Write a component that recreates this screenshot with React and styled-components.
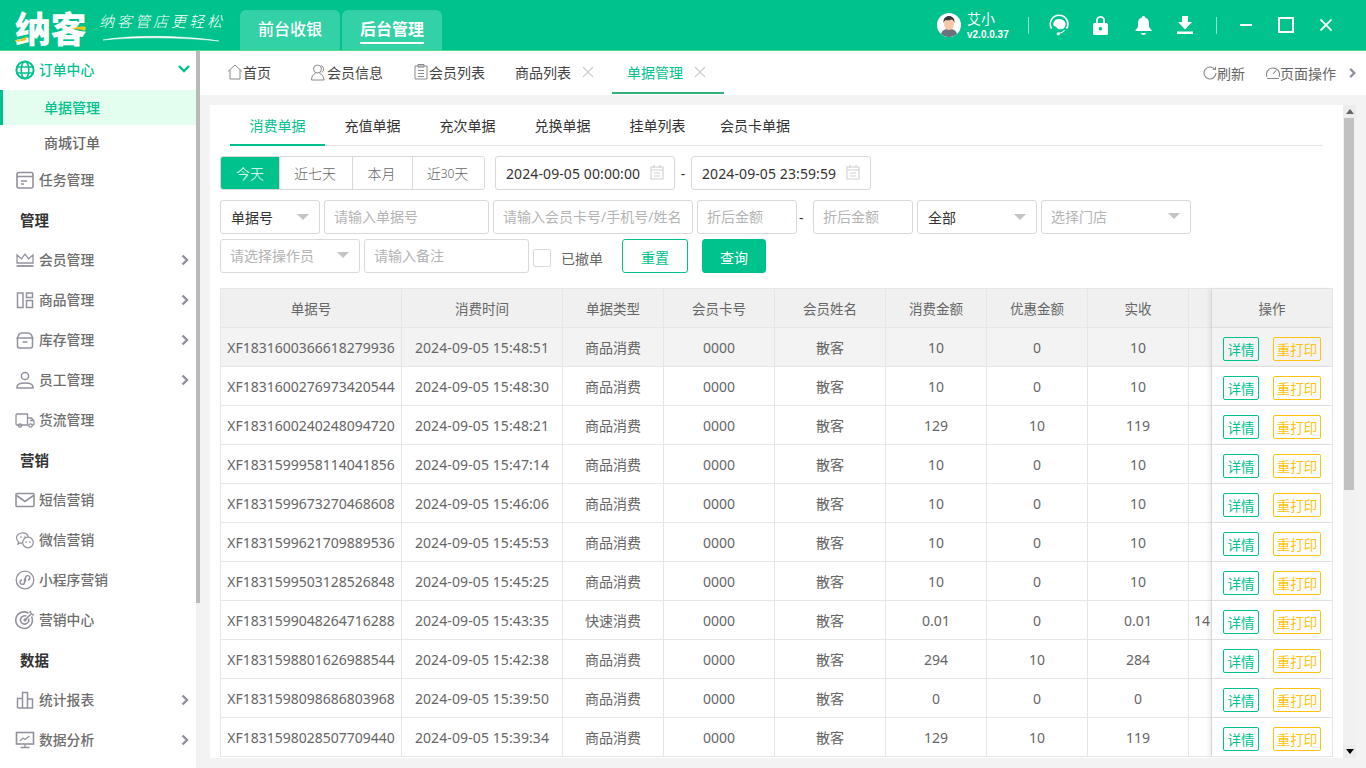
import React from 'react';
import styled, { createGlobalStyle } from 'styled-components';

const GREEN = '#00c28c';
const FONT = '"Noto Sans", "Noto Sans CJK SC", sans-serif';

const Global = createGlobalStyle`
  html, body { margin: 0; padding: 0; height: 100%; overflow: hidden; background: #f3f3f3; }
  body { font-family: ${FONT}; font-size: 14px; color: #666; }
  * { box-sizing: border-box; }
  input { font-family: inherit; }
`;

const Shell = styled.div`display: flex; flex-direction: column; width: 1366px; height: 768px; overflow: hidden;`;

/* ---------- header ---------- */
const Header = styled.header`
  flex: 0 0 51px; display: flex; align-items: stretch; background: ${GREEN};
  border-bottom: 1px solid #4fdc8e; color: #fff;
`;
const Brand = styled.div`position: relative; flex: 0 0 240px; display: flex; align-items: flex-start; padding: 5px 0 0 15px;`;
const BrandName = styled.span`font-size: 36px; line-height: 44px; font-weight: 900; letter-spacing: -0.5px; font-family: "Noto Sans CJK SC", sans-serif;`;
const Slogan = styled.span`
  margin: 6px 0 0 13px; font-size: 15px; line-height: 20px; letter-spacing: 3px; font-style: italic; font-weight: 300;
  font-family: "Noto Sans CJK SC", sans-serif; white-space: nowrap;
`;
const BrandArt = styled.svg`position: absolute; left: 0; top: 0; pointer-events: none;`;
const Modes = styled.nav`display: flex; gap: 2px; align-items: flex-end;`;
const Mode = styled.div`
  width: 100px; height: 40px; background: #33d1a6; border-radius: 6px 6px 0 0; display: flex; align-items: center; justify-content: center; padding-top: 1px;
`;
const ModeLabel = styled.span`
  font-size: 16px; line-height: 24px; font-weight: ${p => (p.$on ? 700 : 500)}; padding-bottom: 1px;
  border-bottom: 2px solid ${p => (p.$on ? '#fff' : 'transparent')};
`;
const HeaderRight = styled.div`margin-left: auto; display: flex; align-items: center; padding-right: 34px;`;
const Avatar = styled.svg`width: 24px; height: 24px; margin-right: 6px;`;
const UserBox = styled.div`display: flex; flex-direction: column; width: 61px; margin-top: 1px;`;
const UserName = styled.span`font-size: 14px; line-height: 18px;`;
const Version = styled.span`font-family: "Liberation Sans", sans-serif; font-size: 10px; line-height: 14px; font-weight: 700; white-space: nowrap;`;
const VLine = styled.i`display: block; width: 1px; height: 17px; background: rgba(255,255,255,.55); margin-left: ${p => p.$ml || 0}px;`;
const HIcon = styled.svg`display: block; margin-left: ${p => p.$ml}px; fill: #fff;`;

/* ---------- body ---------- */
const Body = styled.div`flex: 1; display: flex; min-height: 0;`;
const Side = styled.aside`flex: 0 0 200px; background: #fff; display: flex; min-height: 0;`;
const SideList = styled.div`flex: 1; min-width: 0; overflow: hidden;`;
const SideTrack = styled.div`flex: 0 0 4px; background: #f1f1f1;`;
const SideThumb = styled.div`height: 552px; background: #b9b9b9;`;
const NavRow = styled.div`
  height: ${p => p.$h || 40}px; display: flex; align-items: center; padding: ${p => (p.$h ? '0 5px 2px 15px' : '0 5px 0 15px')}; gap: 4px;
  font-weight: 500; color: ${p => (p.$green ? GREEN : '#6e6e6e')}; font-size: 13.8px;
`;
const NavIcon = styled.svg`width: 20px; height: 20px; flex: none; fill: none; stroke: currentColor; stroke-width: 1.4; color: ${p => (p.$green ? GREEN : '#92929f')};`;
const NavText = styled.span`flex: 1; line-height: 20px; white-space: nowrap;`;
const Chevron = styled.svg`width: 12px; height: 12px; flex: none; fill: none; stroke: ${p => p.$c || '#8f8f9d'}; stroke-width: 2.4;`;
const DownChevron = styled(Chevron)`margin: -2px 1px 0 0;`;
const SubRow = styled.div`
  height: 35px; display: flex; align-items: center; padding: 0 0 2px ${p => (p.$on ? 41 : 44)}px; font-weight: 500;
  color: ${p => (p.$on ? GREEN : '#666')}; background: ${p => (p.$on ? '#e3fdee' : 'transparent')};
  border-left: ${p => (p.$on ? `3px solid ${GREEN}` : '0')};
`;
const Section = styled.div`height: 40px; display: flex; align-items: center; padding: 0 0 2px 20px; font-size: 14.5px; font-weight: 700; color: #333;`;

const Main = styled.main`flex: 1; min-width: 0; display: flex; flex-direction: column;`;
const TabBar = styled.div`flex: 0 0 44px; background: #fff; display: flex; align-items: stretch; padding: 0 8px 1px 12px;`;
const Tab = styled.div`
  display: flex; align-items: center; padding: 0 ${p => (p.$on ? 18 : 15)}px 0 15px; margin-right: ${p => p.$after || 0}px; color: ${p => (p.$on ? GREEN : '#444')};
  border-bottom: 2px solid ${p => (p.$on ? '#2fb37a' : 'transparent')}; white-space: nowrap;
`;
const TabIcon = styled.svg`width: ${p => p.$w || 16}px; height: 18px; fill: none; stroke: #8a8a8a; stroke-width: 1;`;
const TabClose = styled.svg`width: 12px; height: 12px; margin-left: 11px; stroke: #cfcfcf; stroke-width: 1.3;`;
const TabTools = styled.div`margin-left: auto; display: flex; align-items: center; color: #666;`;
const Tool = styled.div`display: flex; align-items: center; margin-right: ${p => p.$mr}px;`;
const ToolIcon = styled.svg`width: 14px; height: 14px; fill: none; stroke: #888; stroke-width: 1.1;`;
const ToolChevron = styled(Chevron)`width: 11px;`;

const Content = styled.div`flex: 1; min-height: 0; padding: 10px; display: flex;`;
const Card = styled.section`flex: 1; min-width: 0; display: flex; background: #fff;`;
const CardBody = styled.div`flex: 1; min-width: 0; overflow: hidden; padding: 0 10px;`;
const Track = styled.div`flex: 0 0 13px; background: #f1f1f1; display: flex; flex-direction: column; align-items: center;`;
const TrackBtn = styled.div`flex: 0 0 13px; align-self: stretch; background: #ececec; display: flex; align-items: center; justify-content: center;`;
const Arrow = styled.i`
  width: 0; height: 0; border-left: 4px solid transparent; border-right: 4px solid transparent;
  ${p => (p.$up ? 'border-bottom: 5px solid #666;' : 'border-top: 5px solid #000;')}
`;
const Thumb = styled.div`flex: 0 0 372px; width: 10px; margin-right: 1px; background: #c1c1c1;`;
const TrackRest = styled.div`flex: 1;`;

const SubTabs = styled.div`display: flex; height: 41px; margin: 0 10px; border-bottom: 1px solid #e6e6e6;`;
const SubTab = styled.div`
  width: ${p => p.$w || 95}px; height: 41px; display: flex; align-items: center; justify-content: center;
  white-space: nowrap; color: ${p => (p.$on ? GREEN : '#333')}; border-bottom: 2px solid ${p => (p.$on ? GREEN : 'transparent')};
`;

const Row = styled.div`display: flex; align-items: center; gap: 4px; height: 34px; margin-top: ${p => p.$mt}px;`;
const Range = styled.div`display: flex; width: 265px; height: 34px; border: 1px solid #d9d9d9; border-radius: 3px; overflow: hidden; margin-right: 6px;`;
const RangeItem = styled.div`
  flex: 0 0 ${p => p.$w}px; display: flex; align-items: center; justify-content: center; white-space: nowrap; font-weight: 300;
  background: ${p => (p.$on ? GREEN : '#fff')}; color: ${p => (p.$on ? '#fff' : '#666')};
  & + & { border-left: 1px solid #d9d9d9; padding-right: 2px; }
`;
const SmallDigits = styled.span`font-size: 12px;`;
const DateBox = styled.div`
  width: 180px; height: 34px; border: 1px solid #d9d9d9; border-radius: 3px; display: flex; align-items: center; justify-content: space-between;
  padding: 0 10px; color: #333; white-space: nowrap; letter-spacing: .1px;
`;
const CalIcon = styled.svg`width: 14px; height: 16px; fill: none; stroke: #d0d0d0; stroke-width: 1.1; margin-top: -3px;`;
const Dash = styled.span`width: 8px; color: #333; margin: 0 2px 0 -2px;`;
const DateDash = styled.span`width: 8px; color: #333; text-align: center;`;
const Input = styled.input`
  width: ${p => p.$w}px; height: 34px; border: 1px solid #d9d9d9; border-radius: 3px; padding: 0 9px 2px; font-size: 14px; outline: none; color: #333;
  &::placeholder { color: #b4b4b4; opacity: 1; }
`;
const Select = styled.div`
  width: ${p => p.$w}px; height: 34px; border: 1px solid #d9d9d9; border-radius: 3px; padding: 0 10px ${p => (p.$ph ? 2 : 0)}px ${p => (p.$ph ? 9 : 10)}px; display: flex; align-items: center; justify-content: space-between;
  color: ${p => (p.$ph ? '#b4b4b4' : '#333')}; white-space: nowrap;
`;
const Caret = styled.i`width: 0; height: 0; border-left: 6px solid transparent; border-right: 6px solid transparent; border-top: 6px solid #c4c4c4;`;
const Check = styled.i`display: block; width: 18px; height: 18px; border: 1px solid #d9d9d9; border-radius: 2px; margin: 4px 6px 0 0;`;
const CheckLabel = styled.span`color: #666; margin-top: 4px;`;
const Btn = styled.button`
  width: ${p => p.$w}px; height: 34px; border-radius: 3px; border: 1px solid ${GREEN}; font-family: inherit; font-size: 14px; margin-left: ${p => p.$ml}px; padding: 2px 0 0;
  background: ${p => (p.$fill ? GREEN : '#fff')}; color: ${p => (p.$fill ? '#fff' : GREEN)};
`;

const Table = styled.div`margin-top: 15px; width: 1113px; border-top: 1px solid #e6e6e6; border-left: 1px solid #e6e6e6;`;
const TR = styled.div`
  display: grid; grid-template-columns: 181px 161px 101px 111px 111px 101px 101px 101px 23px 121px; height: 39px;
  background: ${p => (p.$head ? '#f0f0f0' : p.$hover ? '#f3f3f3' : '#fff')};
`;
const TD = styled.div`
  display: flex; align-items: center; justify-content: ${p => (p.$left ? 'flex-start' : 'center')}; padding-left: ${p => (p.$left ? 5 : 0)}px;
  white-space: nowrap; overflow: hidden; color: #666; border-right: 1px solid #e6e6e6; border-bottom: 1px solid #e6e6e6;
  font-size: ${p => (p.$head ? 13.5 : 14)}px; letter-spacing: ${p => (p.$wide ? '.1px' : '0')};
`;
const FixedTD = styled(TD)`
  position: relative; gap: 14px; background: ${p => (p.$head ? '#f0f0f0' : p.$hover ? '#f3f3f3' : '#fff')}; box-shadow: -3px 0 4px rgba(0,0,0,.07);
`;
const MiniBtn = styled.span`
  width: ${p => p.$w}px; height: 24px; border: 1px solid ${p => p.$c}; border-radius: 2px; color: ${p => p.$c}; display: flex; align-items: center; justify-content: center; margin-top: 4px; font-size: 13.5px;
`;

/* ---------- icons ---------- */
const paths = {
  globe: <><circle cx="10" cy="10" r="8.6" strokeWidth="2"/><ellipse cx="10" cy="10" rx="3.8" ry="8.6" strokeWidth="1.6"/><path d="M1.6 7h16.8M1.6 13h16.8" strokeWidth="1.6"/></>,
  task: <><rect x="2" y="2.5" width="16" height="15.5" rx="2" strokeWidth="1.6"/><path d="M2 6.5h16M6 11h6M6 14h3" strokeWidth="1.6"/></>,
  crown: <><path d="M2 13V5l4.5 3.8L10 4l3.5 4.8L18 5v8z" strokeWidth="1.3"/><path d="M1.5 16h17" strokeWidth="1.8"/></>,
  goods: <><rect x="2.5" y="3" width="5.5" height="14.5" strokeWidth="1.5"/><rect x="11.5" y="3" width="6" height="4.5" strokeWidth="1.5"/><rect x="11.5" y="10.5" width="6" height="7" strokeWidth="1.5"/></>,
  store: <><path d="M2.5 8.5C3 5 4.5 3 7 3h6c2.5 0 4 2 4.5 5.5" strokeWidth="1.5"/><path d="M1.5 8h17" strokeWidth="1.5"/><path d="M2.5 8v8a2 2 0 0 0 2 2h11a2 2 0 0 0 2-2V8M7.5 12h5" strokeWidth="1.5"/></>,
  user: <><circle cx="10" cy="6" r="3.6" strokeWidth="1.5"/><path d="M2 18v-.8c0-2.4 3-4.2 8-4.2s8 1.8 8 4.2v.8z" strokeWidth="1.5"/></>,
  truck: <><path d="M12.5 15H7M3 15H2a1 1 0 0 1-1-1V5a1 1 0 0 1 1-1h10.5v11zM12.5 8h4l2.500 3v3a1 1 0 0 1-1 1h-1M12.5 15h1M15 10.500h4" strokeWidth="1.3"/><circle cx="5" cy="15.500" r="1.700" strokeWidth="1.3"/><circle cx="15.500" cy="15.500" r="1.700" strokeWidth="1.300"/></>,
  mail: <><rect x="1" y="3.500" width="18" height="13" rx="1" strokeWidth="1.600"/><path d="M1.500 5.500L10 11.500l8.500-6" strokeWidth="1.600"/></>,
  wechat: <><path d="M13.500 7.200C13 4.500 10.500 2.800 7.600 2.800 4.300 2.800 1.500 5 1.500 8c0 1.600.8 3 2.100 4l-.6 2 2.300-1.100c.7.200 1.400.3 2.100.3" strokeWidth="1.200"/><circle cx="13" cy="12.500" r="5.300" strokeWidth="1.200"/><path d="M6 7h.01M10 7h.01M11 12h.01M15 12h.01" strokeWidth="1.700" strokeLinecap="round"/></>,
  mini: <><circle cx="10" cy="10" r="8.800" strokeWidth="1.300"/><path d="M9.500 8.200v4a2.200 2.200 0 1 1-2.400-2.200M10.500 11.800v-4a2.200 2.200 0 1 1 2.400 2.200" strokeWidth="1.400"/></>,
  target: <><path d="M16.500 6.500a8.300 8.300 0 1 1-3-3.300" strokeWidth="1.600"/><path d="M13.600 8.500a4.200 4.200 0 1 1-2.200-2.400" strokeWidth="1.600"/><circle cx="10" cy="10" r="1.200" fill="currentColor" strokeWidth="1"/><path d="M10 10l7-7M15 3l.5-2M17 5l2-.5" strokeWidth="1.600"/></>,
  chart: <><path d="M2.500 18V8.500h5V18M7.500 18V2.500h5V18M12.500 18v-9h5v9zM2.500 18h15" strokeWidth="1.500"/></>,
  monitor: <><rect x="1.500" y="2.500" width="17" height="11.500" strokeWidth="1.600"/><path d="M5 11l3-3 2 1.500L14.500 6M10 14v3M5.500 17.500h9" strokeWidth="1.300"/></>,
};
const Icon = ({ name, green }) => <NavIcon $green={green} viewBox="0 0 20 20">{paths[name]}</NavIcon>;
const ChevR = () => <Chevron viewBox="0 0 12 12"><path d="M3.500 1.500L8 6l-4.500 4.500" /></Chevron>;
const Cal = () => <CalIcon viewBox="0 0 14 16"><path d="M1 3h12v12H1zM4 1v3M10 1v3M1 6h12M4 9h6M4 12h6" /></CalIcon>;
const Close = () => <TabClose viewBox="0 0 12 12"><path d="M1 1l10 10M11 1L1 11" /></TabClose>;

const items = [
  { t: 'sub', label: '单据管理', on: true }, { t: 'sub', label: '商城订单' },
  { t: 'nav', label: '任务管理', icon: 'task' },
  { t: 'sec', label: '管理' },
  { t: 'nav', label: '会员管理', icon: 'crown', more: true },
  { t: 'nav', label: '商品管理', icon: 'goods', more: true },
  { t: 'nav', label: '库存管理', icon: 'store', more: true },
  { t: 'nav', label: '员工管理', icon: 'user', more: true },
  { t: 'nav', label: '货流管理', icon: 'truck' },
  { t: 'sec', label: '营销' },
  { t: 'nav', label: '短信营销', icon: 'mail' },
  { t: 'nav', label: '微信营销', icon: 'wechat' },
  { t: 'nav', label: '小程序营销', icon: 'mini' },
  { t: 'nav', label: '营销中心', icon: 'target' },
  { t: 'sec', label: '数据' },
  { t: 'nav', label: '统计报表', icon: 'chart', more: true },
  { t: 'nav', label: '数据分析', icon: 'monitor', more: true },
];

const heads = ['单据号', '消费时间', '单据类型', '会员卡号', '会员姓名', '消费金额', '优惠金额', '实收', ''];
const rows = [
  ['XF1831600366618279936', '2024-09-05 15:48:51', '商品消费', '10', '0', '10'],
  ['XF1831600276973420544', '2024-09-05 15:48:30', '商品消费', '10', '0', '10'],
  ['XF1831600240248094720', '2024-09-05 15:48:21', '商品消费', '129', '10', '119'],
  ['XF1831599958114041856', '2024-09-05 15:47:14', '商品消费', '10', '0', '10'],
  ['XF1831599673270468608', '2024-09-05 15:46:06', '商品消费', '10', '0', '10'],
  ['XF1831599621709889536', '2024-09-05 15:45:53', '商品消费', '10', '0', '10'],
  ['XF1831599503128526848', '2024-09-05 15:45:25', '商品消费', '10', '0', '10'],
  ['XF1831599048264716288', '2024-09-05 15:43:35', '快速消费', '0.01', '0', '0.01', '14'],
  ['XF1831598801626988544', '2024-09-05 15:42:38', '商品消费', '294', '10', '284'],
  ['XF1831598098686803968', '2024-09-05 15:39:50', '商品消费', '0', '0', '0'],
  ['XF1831598028507709440', '2024-09-05 15:39:34', '商品消费', '129', '10', '119'],
];

export default function App() {
  return (
    <Shell>
      <Global />
      <Header>
        <Brand>
          <BrandName>纳客</BrandName>
          <Slogan>纳客管店更轻松</Slogan>
          <BrandArt width="240" height="50" viewBox="0 0 240 50">
            <path d="M15 40c4 0 8-1 12-4l-1 4c-3 1-7 2-11 1z" fill="#f5c518" />
            <path d="M71 29c5-2 10-3 15-2l-1 4c-4-2-9-2-14-2z" fill="#f5c518" />
            <path d="M103 40C130 35 180 35 219 41C180 37 135 37 103 40z" fill="#fff" stroke="#fff" strokeWidth=".5" />
          </BrandArt>
        </Brand>
        <Modes>
          <Mode><ModeLabel>前台收银</ModeLabel></Mode>
          <Mode><ModeLabel $on>后台管理</ModeLabel></Mode>
        </Modes>
        <HeaderRight>
          <Avatar viewBox="0 0 24 24">
            <circle cx="12" cy="12" r="12" fill="#fff" />
            <path d="M4 21c1-4 4-5 8-5s7 1 8 5a12 12 0 0 1-16 0z" fill="#6b7280" />
            <ellipse cx="12" cy="11" rx="5" ry="6" fill="#f6c8a8" />
            <path d="M6.500 10c-.5-5 2.500-7 5.500-7s6 2 5.500 7c-1-2.500-2-3.500-3-3.500-2 1-5 1-6 .5-.8 1-1.500 1.500-2 3z" fill="#3a3a3a" />
          </Avatar>
          <UserBox><UserName>艾小</UserName><Version>v2.0.0.37</Version></UserBox>
          <VLine />
          <HIcon $ml={20} width="20" height="22" viewBox="0 0 20 22">
            <path d="M10 .500a9.500 9.500 0 0 0-8 14.600l1.300-.9A8 8 0 0 1 2 10a8 8 0 0 1 16 0c0 1.500-.4 3-1.100 4.200l1.300.9A9.500 9.500 0 0 0 10 .500z" />
            <path d="M4.500 8.500c1-2.500 3-3.500 5.500-3.500 3 0 5.500 1.500 6.500 4 .5 2-.5 4.500-2 5.500-2 1.200-5 1-6.500-.5-.8-1.500-2.500-1.500-3.500-2.500-.5-1-.5-2 0-3z" />
            <path d="M16 16.500c-1.500 2-3.500 3-6 3.200v-1.200c2 0 3.700-1 5-2.600z" />
            <circle cx="9.300" cy="19.800" r="1.600" />
          </HIcon>
          <HIcon $ml={24} width="15" height="20" viewBox="0 0 15 20">
            <path d="M3 8V5.500a4.500 4.500 0 0 1 9 0V8h-1.800V5.500a2.700 2.700 0 0 0-5.400 0V8z" />
            <path fillRule="evenodd" d="M1.500 8h12A1.500 1.500 0 0 1 15 9.500v9a1.500 1.500 0 0 1-1.500 1.500h-12A1.500 1.500 0 0 1 0 18.500v-9A1.500 1.500 0 0 1 1.500 8zm6 4a1.800 1.800 0 1 0 0 3.600 1.800 1.800 0 0 0 0-3.600z" />
          </HIcon>
          <HIcon $ml={27} width="17" height="19" viewBox="0 0 17 19">
            <path d="M8.500 0c1 0 1.500.6 1.500 1.400 2.700.7 4 3 4 5.600v4l2.500 3v1H.5v-1L3 11V7c0-2.600 1.300-4.900 4-5.600C7 .6 7.500 0 8.500 0z" />
            <path d="M6 17h5a2.500 2 0 0 1-5 0z" />
          </HIcon>
          <HIcon $ml={25} width="16" height="18" viewBox="0 0 16 18">
            <path d="M5 0h6v6h4l-7 7.500L1 6h4z" />
            <rect x="0" y="15.500" width="16" height="2.500" />
          </HIcon>
          <VLine $ml={23} />
          <HIcon $ml={23} width="12" height="12" viewBox="0 0 12 12"><rect y="5" width="12" height="2" /></HIcon>
          <HIcon $ml={26} width="16" height="16" viewBox="0 0 16 16"><path fill="none" stroke="#fff" strokeWidth="2" d="M1 1h14v14H1z" /></HIcon>
          <HIcon $ml={26} width="12" height="12" viewBox="0 0 12 12"><path fill="none" stroke="#fff" strokeWidth="1.800" d="M.5.500l11 11M11.500.500l-11 11" /></HIcon>
        </HeaderRight>
      </Header>
      <Body>
        <Side>
          <SideList>
            <NavRow $h={39} $green>
              <Icon name="globe" green />
              <NavText>订单中心</NavText>
              <DownChevron $c={GREEN} viewBox="0 0 12 12"><path d="M1 3l5 5 5-5" /></DownChevron>
            </NavRow>
            {items.map(it => {
              if (it.t === 'sub') return <SubRow key={it.label} $on={it.on}>{it.label}</SubRow>;
              if (it.t === 'sec') return <Section key={it.label}>{it.label}</Section>;
              return (
                <NavRow key={it.label}>
                  <Icon name={it.icon} />
                  <NavText>{it.label}</NavText>
                  {it.more && <ChevR />}
                </NavRow>
              );
            })}
          </SideList>
          <SideTrack><SideThumb /></SideTrack>
        </Side>
        <Main>
          <TabBar>
            <Tab $after={9}>
              <TabIcon viewBox="0 0 16 18"><path d="M1 8.500L8 2l7 6.500M3 7v9h10V7" /></TabIcon>首页
            </Tab>
            <Tab>
              <TabIcon $w={17} viewBox="0 0 16 18"><circle cx="7" cy="6" r="4" /><path d="M1 17c0-4 2-6 4-6.500M9 10.500c2.500.5 4 2.500 4.500 6.500H1M10.500 2.500a4 4 0 0 1 1 7" /></TabIcon>会员信息
            </Tab>
            <Tab>
              <TabIcon viewBox="0 0 16 18"><path d="M2 3h12v13H2zM5 1.500h6V4H5zM5 7.500h6M5 10.500h6M5 13.500h6" /></TabIcon>会员列表
            </Tab>
            <Tab $after={3}>
              商品列表<Close />
            </Tab>
            <Tab $on>
              单据管理<Close />
            </Tab>
            <TabTools>
              <Tool $mr={21}>
                <ToolIcon viewBox="0 0 14 14"><path d="M11.500 3a6 6 0 1 0 1.500 4M12.500 .8V3.500H9.800" /></ToolIcon>刷新
              </Tool>
              <Tool $mr={11}>
                <ToolIcon viewBox="0 0 14 14"><path d="M1 11a6.500 6.500 0 1 1 12 0M7 8l3-3.500M1 12.500h12" /></ToolIcon>页面操作
              </Tool>
              <ToolChevron viewBox="0 0 12 12"><path d="M3.500 1.500L8 6l-4.500 4.500" /></ToolChevron>
            </TabTools>
          </TabBar>
          <Content>
            <Card>
              <CardBody>
                <SubTabs>
                  <SubTab $on>消费单据</SubTab>
                  <SubTab>充值单据</SubTab>
                  <SubTab>充次单据</SubTab>
                  <SubTab>兑换单据</SubTab>
                  <SubTab>挂单列表</SubTab>
                  <SubTab $w={100}>会员卡单据</SubTab>
                </SubTabs>
                <Row $mt={10}>
                  <Range>
                    <RangeItem $on $w={58}>今天</RangeItem>
                    <RangeItem $w={73}>近七天</RangeItem>
                    <RangeItem $w={60}>本月</RangeItem>
                    <RangeItem $w={72}>近<SmallDigits>30</SmallDigits>天</RangeItem>
                  </Range>
                  <DateBox>2024-09-05 00:00:00<Cal /></DateBox>
                  <DateDash>-</DateDash>
                  <DateBox>2024-09-05 23:59:59<Cal /></DateBox>
                </Row>
                <Row $mt={10}>
                  <Select $w={100}>单据号<Caret /></Select>
                  <Input $w={165} placeholder="请输入单据号" readOnly />
                  <Input $w={200} placeholder="请输入会员卡号/手机号/姓名" readOnly />
                  <Input $w={100} placeholder="折后金额" readOnly />
                  <Dash>-</Dash>
                  <Input $w={100} placeholder="折后金额" readOnly />
                  <Select $w={120}>全部<Caret /></Select>
                  <Select $w={150} $ph>选择门店<Caret /></Select>
                </Row>
                <Row $mt={5}>
                  <Select $w={140} $ph>请选择操作员<Caret /></Select>
                  <Input $w={165} placeholder="请输入备注" readOnly />
                  <Check />
                  <CheckLabel>已撤单</CheckLabel>
                  <Btn $w={66} $ml={15}>重置</Btn>
                  <Btn $w={64} $ml={10} $fill>查询</Btn>
                </Row>
                <Table>
                  <TR $head>
                    {heads.map((h, i) => <TD key={i} $head>{h}</TD>)}
                    <FixedTD $head>操作</FixedTD>
                  </TR>
                  {rows.map((r, i) => (
                    <TR key={r[0]} $hover={i === 0}>
                      <TD>{r[0]}</TD>
                      <TD $wide>{r[1]}</TD>
                      <TD>{r[2]}</TD>
                      <TD>0000</TD>
                      <TD>散客</TD>
                      <TD>{r[3]}</TD>
                      <TD>{r[4]}</TD>
                      <TD>{r[5]}</TD>
                      <TD $left>{r[6]}</TD>
                      <FixedTD $hover={i === 0}>
                        <MiniBtn $w={36} $c={GREEN}>详情</MiniBtn>
                        <MiniBtn $w={48} $c="#ffc20e">重打印</MiniBtn>
                      </FixedTD>
                    </TR>
                  ))}
                </Table>
              </CardBody>
              <Track>
                <TrackBtn><Arrow $up /></TrackBtn>
                <Thumb />
                <TrackRest />
                <TrackBtn><Arrow /></TrackBtn>
              </Track>
            </Card>
          </Content>
        </Main>
      </Body>
    </Shell>
  );
}
